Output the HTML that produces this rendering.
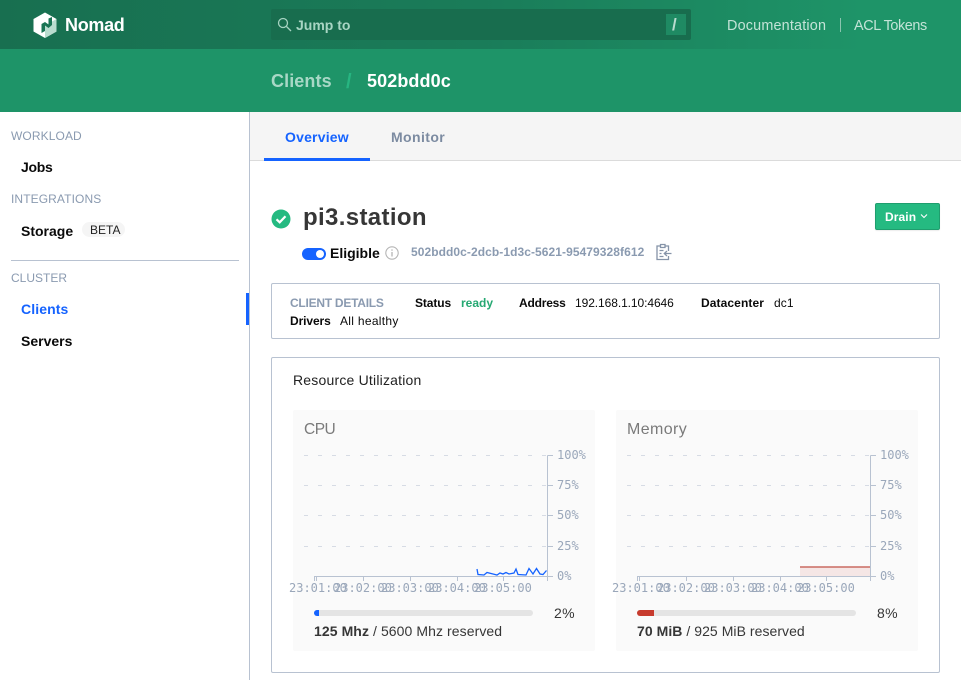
<!DOCTYPE html>
<html lang="en">
<head>
<meta charset="utf-8">
<title>pi3.station - Nomad</title>
<style>
html,body{margin:0;padding:0;background:#fff}
body{position:relative;width:961px;height:680px;overflow:hidden;font-family:"Liberation Sans",sans-serif;font-size:14px;color:#0a0a0a}
.t{position:absolute;white-space:nowrap;line-height:20px}
.b{font-weight:700}
.s12{font-size:12px}
.box{position:absolute;box-sizing:border-box}
svg{position:absolute;overflow:visible}
.mono{font-family:"DejaVu Sans Mono",monospace;font-size:12px;fill:#9aa7ba}
</style>
</head>
<body>
<header class="box" style="left:0;top:0;width:961px;height:112px;background:#1e9468"></header>
<div class="box" style="left:0;top:0;width:961px;height:49px;background:linear-gradient(90deg,#186f50 0%,#1a7c59 50%,#1e9468 90%)"></div>
<svg style="left:33px;top:12px" width="24" height="26" viewBox="0 0 24 26">
<path d="M12 0.500 23.500 7v12.500L12 26 0.500 19.500V7z" fill="#fff"/>
<path d="M12 13.500 23.500 7v12.500L12 26z" fill="#b9dccf"/>
<path d="M8.500 12 12 10 15.500 12.500V6.500L19 5V13L15.500 16 12 13.500V19L8.500 21z" fill="#1a7454"/>
</svg>
<div class="t b" style="left:65px;top:15px;font-size:18px;color:#fff;letter-spacing:-.3px">Nomad</div>
<div class="box" style="left:271px;top:9px;width:420px;height:31px;background:#186d4e;border-radius:2px"></div>
<svg style="left:277px;top:17px" width="15" height="15" viewBox="0 0 15 15" fill="none" stroke="#a6d3c1" stroke-width="1.300"><circle cx="6" cy="6" r="4.500"/><path d="M9.500 9.500 14 14"/></svg>
<div class="t b" style="left:296px;top:15px;color:#a8d5c3">Jump to</div>
<div class="box" style="left:666px;top:14px;width:20px;height:21px;background:#1f8a63"></div>
<div class="t b" style="left:672px;top:15px;color:#b9dccf;font-size:17px">/</div>
<div class="t" style="left:727px;top:16px;color:#c3e3d7;letter-spacing:.18px;font-size:14.400px">Documentation</div>
<div class="box" style="left:840px;top:18px;width:1px;height:14px;background:#8ac5af"></div>
<div class="t" style="left:854px;top:16px;color:#c3e3d7;letter-spacing:-.4px;font-size:14.400px">ACL Tokens</div>
<div class="t b" style="left:271px;top:71px;font-size:18px;color:#a8d8c6;letter-spacing:.1px">Clients</div>
<div class="t b" style="left:346px;top:72px;font-size:20px;color:#27b581">/</div>
<div class="t b" style="left:367px;top:71px;font-size:18px;color:#fff;letter-spacing:.1px">502bdd0c</div>

<nav class="box" style="left:0;top:112px;width:250px;height:568px;border-right:1px solid #b8c2d1"></nav>
<div class="t s12" style="left:11px;top:126px;color:#8a9ab0;letter-spacing:.1px">WORKLOAD</div>
<div class="t b" style="left:21px;top:157px;letter-spacing:-.3px">Jobs</div>
<div class="t s12" style="left:11px;top:189px;color:#8a9ab0;letter-spacing:.1px">INTEGRATIONS</div>
<div class="t b" style="left:21px;top:221px">Storage</div>
<div class="box" style="left:82px;top:222px;width:43px;height:15px;background:#f5f5f5;border-radius:8px"></div>
<div class="t s12" style="left:90px;top:220px;color:#222">BETA</div>
<div class="box" style="left:11px;top:260px;width:228px;height:1px;background:#b8c2d1"></div>
<div class="t s12" style="left:11px;top:268px;color:#8a9ab0">CLUSTER</div>
<div class="t b" style="left:21px;top:299px;color:#1563ff;letter-spacing:.1px">Clients</div>
<div class="box" style="left:246px;top:293px;width:3px;height:32px;background:#1563ff"></div>
<div class="t b" style="left:21px;top:331px">Servers</div>

<div class="box" style="left:250px;top:112px;width:711px;height:49px;background:#f5f5f5;border-bottom:1px solid #dbdbdb"></div>
<div class="box" style="left:264px;top:158px;width:106px;height:3px;background:#1563ff"></div>
<div class="t b" style="left:285px;top:127px;color:#1563ff;letter-spacing:.2px">Overview</div>
<div class="t b" style="left:391px;top:127px;color:#7c8ba1;letter-spacing:.4px">Monitor</div>

<svg style="left:271px;top:209px" width="20" height="20" viewBox="0 0 20 20"><circle cx="10" cy="10" r="9.500" fill="#25ba81"/><path d="M5.500 10.300 8.700 13.300 14.500 7.200" fill="none" stroke="#fff" stroke-width="2.200"/></svg>
<h1 class="t b" style="margin:0;left:303px;top:208px;font-size:24px;color:#363636;letter-spacing:.35px">pi3.station</h1>
<div class="box" style="left:875px;top:203px;width:65px;height:27px;background:#25ba81;border:1px solid #1f9e6e;border-radius:2px;box-shadow:0 1px 1px rgba(0,0,0,.08)"></div>
<div class="t b s12" style="left:885px;top:207px;color:#fff;letter-spacing:.1px">Drain</div>
<svg style="left:920px;top:213px" width="8" height="6" viewBox="0 0 8 6"><path d="M1 1.500 4 4.500 7 1.500" fill="none" stroke="#fff" stroke-width="1.100"/></svg>

<div class="box" style="left:302px;top:248px;width:24px;height:12px;background:#1563ff;border-radius:6px"></div>
<div class="box" style="left:316px;top:250px;width:8px;height:8px;background:#fff;border-radius:50%"></div>
<div class="t b" style="left:330px;top:243px">Eligible</div>
<svg style="left:385px;top:246px" width="14" height="14" viewBox="0 0 14 14"><circle cx="7" cy="7" r="6.200" fill="none" stroke="#b5b5b5" stroke-width="1.100"/><path d="M7 6v4.500M7 3.400v1.300" stroke="#b5b5b5" stroke-width="1.300"/></svg>
<div class="t b s12" style="left:411px;top:242px;color:#8a9ab0;letter-spacing:.07px">502bdd0c-2dcb-1d3c-5621-95479328f612</div>
<svg style="left:656px;top:243px" width="16" height="18" viewBox="0 0 16 18" fill="none" stroke="#8593a8" stroke-width="1.300"><path d="M4.500 3H1v13.500h11.500V13M12.500 8V3H9"/><path d="M4.500 1.500h4.500v3H4.500zM3.500 7.500h4M3.500 10.500h2M3.500 13.500h4M15.500 10.500H8.500M11 8l-2.700 2.500L11 13"/></svg>

<section class="box" style="left:271px;top:283px;width:669px;height:56px;border:1px solid #b8c2d1;border-radius:2px"></section>
<div class="t b s12" style="left:290px;top:293px;color:#8a9ab0;letter-spacing:-.25px">CLIENT DETAILS</div>
<div class="t b s12" style="left:415px;top:293px;letter-spacing:-.1px">Status</div>
<div class="t b s12" style="left:461px;top:293px;color:#25a872">ready</div>
<div class="t b s12" style="left:519px;top:293px;letter-spacing:-.2px">Address</div>
<div class="t s12" style="left:575px;top:293px;letter-spacing:-.08px">192.168.1.10:4646</div>
<div class="t b s12" style="left:701px;top:293px;letter-spacing:.1px">Datacenter</div>
<div class="t s12" style="left:774px;top:293px;letter-spacing:.1px">dc1</div>
<div class="t b s12" style="left:290px;top:311px;letter-spacing:-.1px">Drivers</div>
<div class="t s12" style="left:340px;top:311px;letter-spacing:.3px">All healthy</div>

<section class="box" style="left:271px;top:357px;width:669px;height:316px;border:1px solid #b8c2d1;border-radius:2px"></section>
<div class="t" style="left:293px;top:370px;color:#222;letter-spacing:.2px">Resource Utilization</div>

<div class="box" style="left:293px;top:410px;width:302px;height:241px;background:#fafafa;border-radius:2px"></div>
<div class="box" style="left:616px;top:410px;width:302px;height:241px;background:#fafafa;border-radius:2px"></div>
<div class="t" style="left:304px;top:420px;font-size:15.500px;color:#7a7a7a;letter-spacing:-.5px">CPU</div>
<div class="t" style="left:627px;top:420px;font-size:16px;color:#7a7a7a;letter-spacing:.4px">Memory</div>

<svg style="left:0;top:0" width="961" height="680">
<defs>
<g id="chart">
<path d="M304 455.500H547M304 485.500H547M304 515.500H547M304 546.500H547" stroke="#d6dbe4" stroke-dasharray="4 10" fill="none"/>
<path d="M314.500 581V576.500H547.500M363.500 576.500V581M410.500 576.500V581M457.500 576.500V581M503.500 576.500V581M316.500 576.500V581M547.500 581V455.500M547.500 455.500H553M547.500 485.500H553M547.500 515.500H553M547.500 546.500H553M547.500 576.500H553" stroke="#b8c2d1" fill="none"/>
<text class="mono" x="557" y="459">100%</text>
<text class="mono" x="557" y="489">75%</text>
<text class="mono" x="557" y="519">50%</text>
<text class="mono" x="557" y="550">25%</text>
<text class="mono" x="557" y="580">0%</text>
<text class="mono" x="289" y="592">23:01:00</text>
<text class="mono" x="334" y="592">23:02:00</text>
<text class="mono" x="381" y="592">23:03:00</text>
<text class="mono" x="428" y="592">23:04:00</text>
<text class="mono" x="474" y="592">23:05:00</text>
</g>
</defs>
<use href="#chart"/>
<use href="#chart" x="323"/>
<path d="M477 569 478 574.500 484 575 487 572.500 493 574 497 575 500 573 503 574 506 572.500 509 574 514 573 516 569 518 574.500 526 575 529 568.500 533 574 536.500 568.500 540 574 543 574.500 546.500 570.500" fill="none" stroke="#1563ff" stroke-width="1.300"/>
<rect x="800" y="567" width="70" height="9" fill="#f5e6e5"/>
<path d="M800 567H870" stroke="#c96b62" stroke-width="1.500"/>
</svg>

<div class="box" style="left:314px;top:610px;width:219px;height:6px;background:#e4e4e4;border-radius:3px"></div>
<div class="box" style="left:314px;top:610px;width:5px;height:6px;background:#1563ff;border-radius:3px 0 0 3px"></div>
<div class="t" style="left:554px;top:603px;color:#363636;letter-spacing:.3px">2%</div>
<div class="t" style="left:314px;top:621px;color:#363636;letter-spacing:.08px"><b>125 Mhz</b> / 5600 Mhz reserved</div>
<div class="box" style="left:637px;top:610px;width:219px;height:6px;background:#e4e4e4;border-radius:3px"></div>
<div class="box" style="left:637px;top:610px;width:17px;height:6px;background:#c73b2e;border-radius:3px 0 0 3px"></div>
<div class="t" style="left:877px;top:603px;color:#363636;letter-spacing:.3px">8%</div>
<div class="t" style="left:637px;top:621px;color:#363636;letter-spacing:.05px"><b>70 MiB</b> / 925 MiB reserved</div>
</body>
</html>
